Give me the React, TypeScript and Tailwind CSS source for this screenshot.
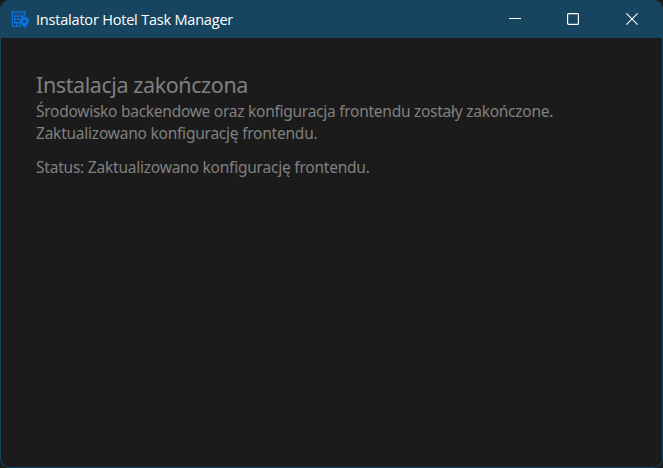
import React from 'react';

function HotelIcon() {
  return (
    <svg width="18" height="17" viewBox="0 0 18 17" fill="none" stroke="#0b74e5" strokeWidth="1.2">
      <path d="M0 .8H15" strokeWidth="1.3" />
      <path d="M1.4 1.5V15.5H9.5M13.6 1.5V4.8" />
      <path d="M1.5 2.9H13.5" strokeWidth="1" opacity=".4" />
      <path d="M2.8 5.2H5.4M6.3 5.2H8.7M9.7 5.2H12.3M2.8 8.3H5.4M6.3 8.3H8.7M2.8 11.5H5" strokeWidth="2" />
      <path d="M5.6 15.4V11.6H8.6V15.4" />
      <path
        fillRule="evenodd"
        d="M13.5 5.8a4.5 4.5 0 0 0-4.5 4.5c0 2.6 4.5 6.5 4.5 6.5s4.5-3.9 4.5-6.5a4.5 4.5 0 0 0-4.5-4.5Zm0 2.8a1.7 1.7 0 1 1 0 3.4 1.7 1.7 0 0 1 0-3.4Z"
        fill="#0b74e5"
        stroke="none"
      />
    </svg>
  );
}

function WindowControls() {
  return (
    <div className="flex h-full text-white">
      <button className="grid h-full w-[58px] place-items-center" aria-label="Minimize">
        <svg width="12" height="12" viewBox="0 0 12 12" stroke="currentColor">
          <path d="M0 5.5H12" />
        </svg>
      </button>
      <button className="grid h-full w-[58px] place-items-center" aria-label="Maximize">
        <svg width="12" height="12" viewBox="0 0 12 12" stroke="currentColor" fill="none">
          <rect x=".6" y=".6" width="10.8" height="10.8" rx="1" strokeWidth="1.2" />
        </svg>
      </button>
      <button className="grid h-full w-[60px] place-items-center" aria-label="Close">
        <svg width="12" height="12" viewBox="0 0 12 12" stroke="currentColor">
          <path d="M.4.4 11.6 11.6M11.6.4.4 11.6" strokeWidth="1.1" />
        </svg>
      </button>
    </div>
  );
}

export default function App() {
  return (
    <div className="h-[468px] w-[663px] bg-[#1b1b1b]">
      <div className="flex h-full flex-col overflow-hidden rounded-[9px] border border-t-0 border-[#174560] bg-[#1b1b1b]">
        <header className="flex h-[38px] shrink-0 items-center justify-between bg-[#174560] pl-[10px]">
          <div className="flex items-center gap-[7px]">
            <HotelIcon />
            <span className="whitespace-nowrap pt-px font-['Open_Sans','Noto_Sans',sans-serif] text-[14.5px] leading-5 tracking-[-0.2px] text-white">
              Instalator Hotel Task Manager
            </span>
          </div>
          <WindowControls />
        </header>
        <main className="whitespace-nowrap px-[35px] pt-[33px] font-['Noto_Sans',sans-serif] text-[#808080]">
          <h1 className="text-[21.5px] font-normal leading-[28px] tracking-[-0.41px]">Instalacja zakończona</h1>
          <p className="mt-px text-[15.5px] leading-[22px]">
            <span className="tracking-[-0.265px]">Środowisko backendowe oraz konfiguracja frontendu zostały zakończone.</span>
            <br />
            <span className="tracking-[-0.23px]">Zaktualizowano konfigurację frontendu.</span>
          </p>
          <p className="mt-3 text-[15.5px] leading-[22px] tracking-[-0.22px]">
            <span>Status: Zaktualizowano konfigurację frontendu.</span>
          </p>
        </main>
      </div>
    </div>
  );
}
